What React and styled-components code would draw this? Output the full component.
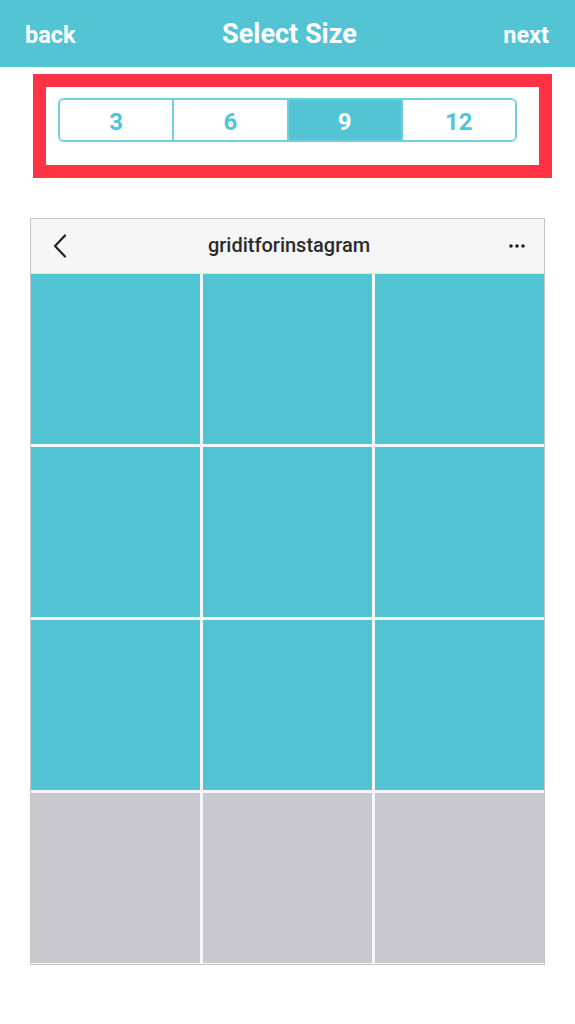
import styled, { createGlobalStyle } from 'styled-components'

const teal = '#52c4d3'

const GlobalStyle = createGlobalStyle`
    html, body {
        margin: 0;
        padding: 0;
        background: #ffffff;
        font-family: Roboto, 'Noto Sans', sans-serif;
    }
`

const sizes = [3, 6, 9, 12]
const selected = 9

const App = () => {
    const cells = Array.from({ length: 12 }, (_, i) => i < selected)

    return (
        <Page>
            <GlobalStyle />
            <TopBar>
                <NavLink>back</NavLink>
                <Title>Select Size</Title>
                <NavLink>next</NavLink>
            </TopBar>

            <Highlight>
                <Segments>
                    {sizes.map(size => (
                        <Segment key={size} active={size === selected}>
                            {size}
                        </Segment>
                    ))}
                </Segments>
            </Highlight>

            <Frame>
                <FrameHeader>
                    <Side>
                        <svg width='16' height='24' viewBox='0 0 16 24'>
                            <path
                                d='M13 1.5 L3 12 L13 22.5'
                                fill='none'
                                stroke='#222'
                                strokeWidth='2.2'
                                strokeLinecap='round'
                                strokeLinejoin='round'
                            />
                        </svg>
                    </Side>
                    <Handle>griditforinstagram</Handle>
                    <Side right>
                        <svg width='18' height='6' viewBox='0 0 18 6'>
                            <circle cx='3' cy='3' r='1.8' fill='#222' />
                            <circle cx='9' cy='3' r='1.8' fill='#222' />
                            <circle cx='15' cy='3' r='1.8' fill='#222' />
                        </svg>
                    </Side>
                </FrameHeader>
                <Grid>
                    {cells.map((filled, i) => (
                        <Cell key={i} filled={filled} />
                    ))}
                </Grid>
            </Frame>
        </Page>
    )
}

const Page = styled.div`
    width: 575px;
    min-height: 1024px;
    background: #fff;
`

const TopBar = styled.header`
    height: 67px;
    background: ${teal};
    display: flex;
    align-items: center;
    justify-content: space-between;
    padding: 0 26px 0 25px;
    box-sizing: border-box;
    color: #fff;
`

const NavLink = styled.span`
    font-size: 23.5px;
    font-weight: 700;
    margin-top: 2px;
`

const Title = styled.h1`
    margin: 0;
    font-size: 27px;
    font-weight: 700;
`

const Highlight = styled.div`
    margin: 7px 0 0 33px;
    width: 519px;
    height: 104px;
    box-sizing: border-box;
    border: 13px solid #ff3344;
    padding: 11px 0 0 12px;
`

const Segments = styled.div`
    display: flex;
    width: 459px;
    height: 44px;
    box-sizing: border-box;
    border: 2px solid #6fd0dd;
    border-radius: 6px;
    overflow: hidden;
`

const Segment = styled.div`
    flex: 1;
    display: flex;
    align-items: center;
    justify-content: center;
    padding-top: 3px;
    font-size: 24px;
    font-weight: 700;
    color: ${props => (props.active ? '#fff' : teal)};
    background: ${props => (props.active ? teal : '#fff')};

    & + & {
        border-left: 2px solid #6fd0dd;
    }
`

const Frame = styled.div`
    margin: 40px 0 0 30px;
    width: 515px;
    box-sizing: border-box;
    border: 1px solid #c4c4c4;
    background: #fff;
`

const FrameHeader = styled.div`
    height: 54px;
    background: #f6f6f6;
    display: flex;
    align-items: center;
    padding: 0 18px 0 21px;
    border-bottom: 1px solid #e4e4e4;
`

const Side = styled.div`
    width: 40px;
    display: flex;
    justify-content: ${props => (props.right ? 'flex-end' : 'flex-start')};
`

const Handle = styled.span`
    flex: 1;
    text-align: center;
    font-size: 20px;
    font-weight: 500;
    color: #2b2b2b;
    margin-bottom: 3px;
`

const Grid = styled.div`
    display: grid;
    grid-template-columns: repeat(3, 1fr);
    grid-auto-rows: 170px;
    gap: 3px;
    background: #f4f6f7;
    padding-bottom: 1px;
`

const Cell = styled.div`
    background: ${props => (props.filled ? teal : '#c9c8cf')};
`

export default App
